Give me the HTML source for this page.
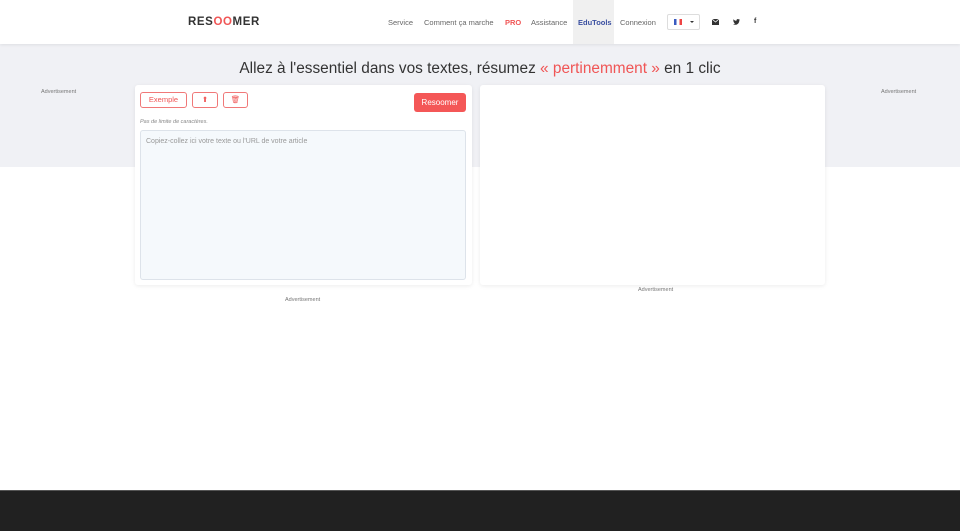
<!DOCTYPE html>
<html><head><meta charset="utf-8"><style>
*{box-sizing:border-box;margin:0;padding:0}
body{width:960px;height:531px;overflow:hidden;background:#fff;font-family:"Liberation Sans",sans-serif;position:relative}
.hdr{position:absolute;left:0;top:0;width:960px;height:44px;background:#fff;box-shadow:0 1px 3px rgba(0,0,0,.08);z-index:2}
.logo{position:absolute;left:188px;top:16px;font-weight:bold;font-size:11.5px;letter-spacing:0.6px;color:#333}
.logo span{color:#f05555}
.nav{position:absolute;top:18px;font-size:7.5px;color:#666}
.band{position:absolute;left:0;top:44px;width:960px;height:123px;background:#f0f1f5}
h1{position:absolute;left:0;width:960px;top:60px;text-align:center;font-weight:normal;font-size:15.4px;color:#333}
h1 span{color:#f05555}
.card{position:absolute;background:#fff;box-shadow:0 1px 4px rgba(0,0,0,.08);border-radius:3px}
.btn{position:absolute;top:92px;height:16px;border:1px solid #f07878;border-radius:3px;color:#f05555;font-size:7.5px;text-align:center;line-height:14px}
.ad{position:absolute;font-size:5.5px;color:#777}
</style></head><body>
<div class="hdr">
<div class="logo">RES<span>OO</span>MER</div>
<div class="nav" style="left:388px">Service</div>
<div class="nav" style="left:424px">Comment ça marche</div>
<div class="nav" style="left:505px;color:#f05555;font-weight:bold">PRO</div>
<div class="nav" style="left:531px">Assistance</div>
<div style="position:absolute;left:573px;top:0;width:41px;height:44px;background:#f0f0f0"></div>
<div class="nav" style="left:578px;color:#3a4fa0;font-weight:bold">EduTools</div>
<div class="nav" style="left:620px">Connexion</div>
<div style="position:absolute;left:667px;top:14px;width:33px;height:16px;border:1px solid #ddd;border-radius:2px"><div style="position:absolute;left:6px;top:4px;width:8px;height:6px;background:linear-gradient(90deg,#3a5bc0 33%,#fff 33% 66%,#e44 66%)"></div><div style="position:absolute;left:22px;top:6px;border:2px solid transparent;border-top:2.5px solid #333"></div></div>
<svg style="position:absolute;left:712px;top:19px" width="7" height="6" viewBox="0 0 7 6"><rect width="7" height="6" fill="#333"/><path d="M0 0L3.5 3L7 0" stroke="#fff" stroke-width="0.8" fill="none"/></svg>
<svg style="position:absolute;left:733px;top:19px" width="7" height="6" viewBox="0 0 24 20"><path d="M24 2.4a10 10 0 0 1-2.8.8A5 5 0 0 0 23.3.4a10 10 0 0 1-3.1 1.2A4.9 4.9 0 0 0 11.8 6 14 14 0 0 1 1.7.9a4.9 4.9 0 0 0 1.5 6.6A4.9 4.9 0 0 1 1 6.9a4.9 4.9 0 0 0 3.9 4.8 5 5 0 0 1-2.2.1 4.9 4.9 0 0 0 4.6 3.4A9.9 9.9 0 0 1 0 17.3 14 14 0 0 0 7.5 19.5c9 0 14-7.5 14-14v-.6A10 10 0 0 0 24 2.4z" fill="#333"/></svg>
<div class="nav" style="left:754px;color:#333;font-weight:bold;font-size:7px">f</div>
</div>
<div class="band"></div>
<h1>Allez à l'essentiel dans vos textes, résumez <span>« pertinemment »</span> en 1 clic</h1>
<div class="ad" style="left:41px;top:89px">Advertisement</div>
<div class="ad" style="left:881px;top:89px">Advertisement</div>
<div class="card" style="left:135px;top:85px;width:337px;height:200px"></div>
<div class="card" style="left:480px;top:85px;width:345px;height:200px"></div>
<div class="btn" style="left:140px;width:47px">Exemple</div>
<div class="btn" style="left:192px;width:26px">⬆</div>
<div class="btn" style="left:223px;width:25px">🗑︎</div>
<div style="position:absolute;left:414px;top:93px;width:52px;height:19px;background:#f45757;border-radius:3px;color:#fff;font-size:8px;text-align:center;line-height:19px">Resoomer</div>
<div style="position:absolute;left:140px;top:119px;font-size:5.5px;font-style:italic;color:#888">Pas de limite de caractères.</div>
<div style="position:absolute;left:140px;top:130px;width:326px;height:150px;background:#f5f9fc;border:1px solid #dde3ea;border-radius:3px;font-size:7px;color:#999;padding:7px 5px">Copiez-collez ici votre texte ou l'URL de votre article</div>
<div class="ad" style="left:285px;top:297px">Advertisement</div>
<div class="ad" style="left:638px;top:287px">Advertisement</div>
<div style="position:absolute;left:0;top:490px;width:960px;height:41px;background:#212121;border-top:1px solid #555"></div>
</body></html>
